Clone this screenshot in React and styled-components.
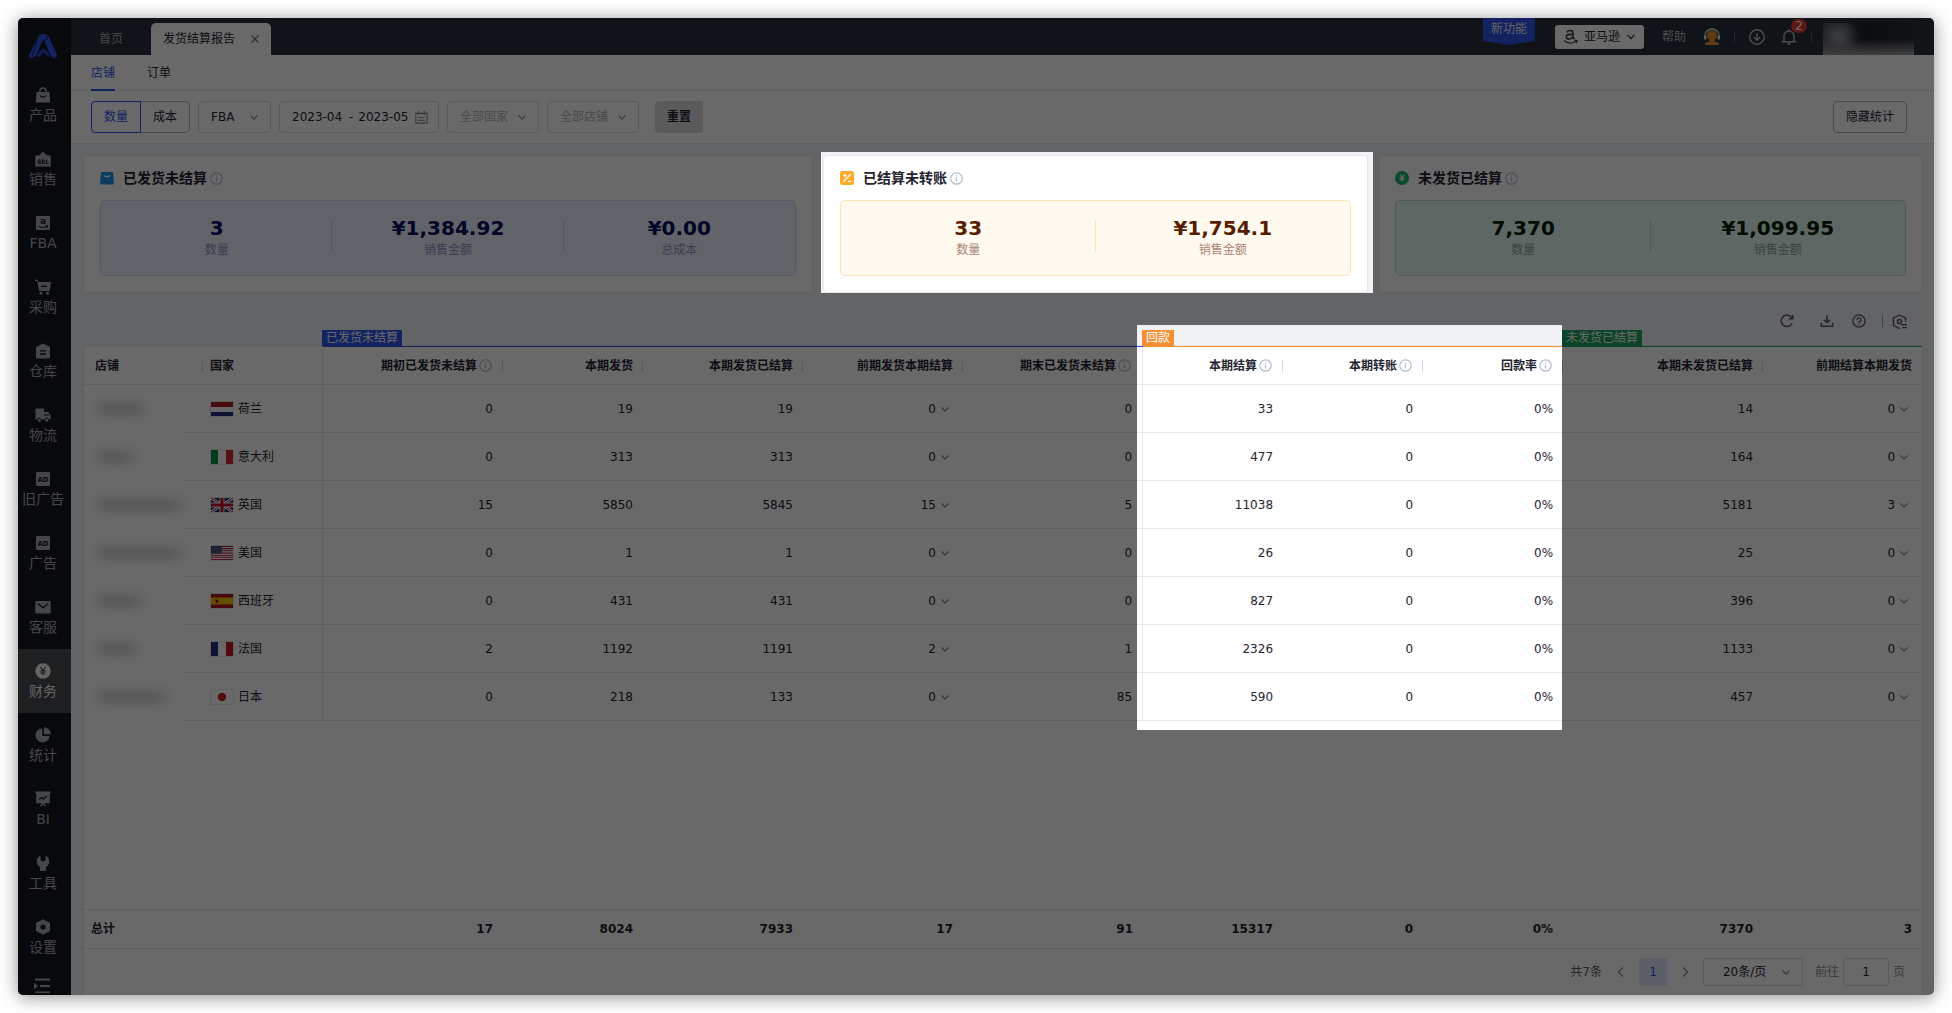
import React, { useEffect, useRef, useState } from "react";
import styled, { createGlobalStyle, css } from "styled-components";

const c = {
  brand: "#2f54eb",
  orange: "#f58d32",
  green: "#21a35c",
  page: "#f0f2f6",
  line: "#e6e7ea",
  control: "#d9dce2",
  text: "#1f2430",
  muted: "#8a8f99",
  faint: "#b0b4bc",
  nav: "#141821",
  head: "#292f3b",
};

const GlobalStyle = createGlobalStyle`
  * { box-sizing: border-box; }
  body {
    margin: 0;
    background: #fff;
    color: ${c.text};
    font: 12px/18px "DejaVu Sans", "Noto Sans CJK SC", sans-serif;
  }
  button, input, select { font: inherit; color: inherit; margin: 0; }
  a { color: inherit; text-decoration: none; }
  svg { display: block; flex: none; }
`;

const Stage = styled.div`
  height: 100vh;
  padding: 18px;
`;

const Frame = styled.div`
  position: relative;
  display: flex;
  height: 100%;
  overflow: hidden;
  border-radius: 5px;
`;

const Shadow = styled.div`
  height: 100%;
  border-radius: 5px;
  box-shadow: 0 2px 18px rgba(0, 0, 0, 0.45);
`;

const Dim = styled.div`
  position: absolute;
  inset: 0;
  z-index: 10;
  background: rgba(0, 0, 0, 0.59);
  pointer-events: none;
`;

/* ---------- side navigation ---------- */
const Side = styled.nav`
  flex: none;
  width: 53px;
  overflow: hidden;
  background: ${c.nav};
`;

const Brand = styled.a`
  display: flex;
  justify-content: center;
  height: 55px;
  padding: 15px 3px 0 0;
`;

const NavItem = styled.a`
  display: flex;
  flex-direction: column;
  align-items: center;
  gap: 2px;
  height: 64px;
  padding: 14px 3px 0 0;
  font-size: 14px;
  line-height: 20px;
  white-space: nowrap;
  color: ${(p) => (p.$active ? "#f2f3f5" : "#a8abb0")};
  background: ${(p) => (p.$active ? "#474b52" : "transparent")};
`;

const Collapse = styled.button`
  display: flex;
  justify-content: center;
  width: 100%;
  padding: 0 5px 0 0;
  border: 0;
  background: none;
  color: #a8abb0;
`;

/* ---------- top bar ---------- */
const Page = styled.div`
  flex: 1;
  min-width: 0;
  display: flex;
  flex-direction: column;
  background: ${c.page};
`;

const TopBar = styled.header`
  display: flex;
  align-items: flex-end;
  flex: none;
  height: 37px;
  background: ${c.head};
`;

const TopTab = styled.a`
  display: flex;
  align-items: center;
  gap: 15px;
  height: 32px;
  padding: 0 ${(p) => (p.$active ? 11 : 28)}px 0 ${(p) => (p.$active ? 12 : 28)}px;
  border-radius: 5px 5px 0 0;
  color: ${(p) => (p.$active ? c.text : "#a9adb5")};
  background: ${(p) => (p.$active ? "#fff" : "transparent")};
`;

const IconButton = styled.button`
  display: flex;
  align-items: center;
  justify-content: center;
  position: relative;
  padding: 0;
  border: 0;
  background: none;
`;

const TopTools = styled.div`
  display: flex;
  align-items: center;
  align-self: stretch;
  margin-left: auto;
  padding-right: 20px;
  color: #b9bdc5;
`;

const NewBadge = styled.a`
  align-self: flex-start;
  width: 52px;
  height: 27px;
  margin-right: 20px;
  padding-top: 2px;
  text-align: center;
  color: #e9edff;
  background: ${c.brand};
  clip-path: polygon(0 0, 100% 0, 100% 85%, 50% 100%, 0 85%);
`;

const Platform = styled.button`
  display: flex;
  align-items: center;
  gap: 6px;
  height: 24px;
  padding: 0 8px;
  border: 0;
  border-radius: 3px;
  background: #fff;
  color: ${c.text};
`;

const HelpLink = styled.a`
  margin: 0 17px 0 18px;
`;

const Bar = styled.span`
  width: 1px;
  height: 12px;
  margin: 0 ${(p) => p.$right}px 0 ${(p) => p.$left}px;
  background: ${(p) => p.$color || "#565c68"};
`;

const BellButton = styled(IconButton)`
  margin-left: 16px;
`;

const Count = styled.span`
  position: absolute;
  top: -10px;
  left: 10px;
  width: 16px;
  height: 14px;
  border-radius: 7px;
  background: #e5392f;
  color: #fff;
  line-height: 14px;
`;

const Account = styled.div`
  align-self: flex-end;
  width: 91px;
  height: 32px;
  background:
    radial-gradient(circle at 16px 14px, #8b8e93 4px, transparent 20px),
    linear-gradient(to bottom, transparent 50%, #9a9b9d),
    linear-gradient(to right, #45484f, #1b1e24 50%, #2a2d33);
`;

/* ---------- sub tabs and filters ---------- */
const SubTabs = styled.nav`
  display: flex;
  flex: none;
  gap: 32px;
  height: 36px;
  padding: 0 20px;
  background: #fff;
  border-bottom: 1px solid ${c.line};
`;

const SubTab = styled.a`
  height: 36px;
  line-height: 36px;
  ${(p) =>
    p.$active &&
    css`
      color: ${c.brand};
      box-shadow: inset 0 -2px ${c.brand};
    `}
`;

const Filters = styled.form`
  display: flex;
  flex: none;
  gap: 8px;
  padding: 10px 27px 10px 20px;
  background: #fff;
  border-bottom: 1px solid ${c.line};
`;

const Segment = styled.div`
  display: flex;
`;

const SegmentButton = styled.button`
  position: relative;
  height: 32px;
  width: 50px;
  padding: 0;
  background: none;
  border: 1px solid #b4b7be;
  border-radius: 0 4px 4px 0;
  margin-left: -1px;
  ${(p) =>
    p.$active &&
    css`
      z-index: 1;
      margin-left: 0;
      color: ${c.brand};
      border-color: ${c.brand};
      border-radius: 4px 0 0 4px;
    `}
`;

const SelectBox = styled.label`
  display: grid;
  align-items: center;
  width: ${(p) => p.$width}px;
  height: ${(p) => p.$height || 32}px;
  border: 1px solid ${c.control};
  border-radius: ${(p) => p.$radius || 4}px;
  color: ${(p) => (p.$placeholder ? c.faint : c.text)};
  & > * { grid-area: 1 / 1; }
  & > svg { justify-self: end; margin-right: 10px; color: ${c.muted}; pointer-events: none; }
  & > select {
    width: 100%;
    height: 100%;
    padding: 0 0 0 ${(p) => p.$pad || 12}px;
    border: 0;
    background: none;
    appearance: none;
    outline: 0;
  }
`;

const DateRange = styled.div`
  display: flex;
  align-items: center;
  gap: 5px;
  width: 160px;
  height: 32px;
  padding: 0 8px 0 12px;
  border: 1px solid ${c.control};
  border-radius: 4px;
  color: ${c.text};
  & > svg { color: ${c.muted}; }
`;

const DateInput = styled.input`
  width: 52px;
  padding: 0;
  border: 0;
  background: none;
  outline: 0;
`;

const Reset = styled.button`
  width: 48px;
  height: 32px;
  margin-left: 8px;
  padding: 0;
  border: 0;
  border-radius: 4px;
  background: #dadada;
  font-weight: 700;
`;

const HideStats = styled.button`
  width: 74px;
  height: 32px;
  margin-left: auto;
  padding: 0;
  border: 1px solid #b4b7be;
  border-radius: 4px;
  background: none;
`;

/* ---------- statistics ---------- */
const Main = styled.main`
  flex: 1;
  min-height: 0;
  display: flex;
  flex-direction: column;
  padding: 11px 11px 0 12px;
`;

const Cards = styled.div`
  display: grid;
  grid-template-columns: 730fr 545fr 545fr;
  gap: 10px;
`;

const Card = styled.section`
  padding: 11px 16px 16px;
  background: #fff;
  border: 1px solid ${c.line};
  border-radius: 4px;
`;

const CardTitle = styled.h2`
  display: flex;
  align-items: center;
  gap: 3px;
  margin: 0 0 11px;
  font-size: 14px;
  line-height: 22px;
  font-weight: 700;
  & > svg:first-child { margin-right: 6px; }
`;

const tones = {
  blue: { bg: "#eaf3fc", border: "#c4daf2", num: "#000a5e", label: "#8f93c6" },
  orange: { bg: "#fff9ef", border: "#ffe2ae", num: "#561e00", label: "#a98373" },
  green: { bg: "#e6faf2", border: "#b2e3cf", num: "#002000", label: "#8ba397" },
};

const Figures = styled.dl`
  display: flex;
  height: 76px;
  margin: 0;
  padding: 16px 0 0;
  border: 1px solid ${(p) => tones[p.$tone].border};
  border-radius: 5px;
  background: ${(p) => tones[p.$tone].bg};
`;

const Figure = styled.div`
  flex: 1;
  display: flex;
  flex-direction: column-reverse;
  justify-content: flex-end;
  text-align: center;
  background: linear-gradient(${(p) => tones[p.$tone].border}, ${(p) => tones[p.$tone].border}) right 3px / 1px 32px no-repeat;
  &:last-child { background: none; }
  & > dt { color: ${(p) => tones[p.$tone].label}; line-height: 22px; }
  & > dd {
    margin: 0;
    color: ${(p) => tones[p.$tone].num};
    font-size: 20px;
    line-height: 22px;
    font-weight: 700;
  }
`;

/* ---------- table ---------- */
const TableTools = styled.div`
  display: flex;
  flex: none;
  align-items: center;
  justify-content: flex-end;
  height: 52px;
  padding: 4px 14px 0 0;
  color: #565a63;
`;

const ToolButton = styled(IconButton)`
  width: 20px;
  height: 20px;
  margin-left: ${(p) => p.$gap || 0}px;
`;

const Panel = styled.section`
  flex: 1;
  min-height: 0;
  display: flex;
  flex-direction: column;
  background: #fff;
  border: 1px solid ${c.line};
  border-bottom: 0;
  border-radius: 4px 4px 0 0;
`;

const Table = styled.table`
  width: 100%;
  table-layout: fixed;
  border-collapse: separate;
  border-spacing: 0;
  margin-top: ${(p) => (p.$totals ? "auto" : "-16px")};
`;

const GroupCell = styled.th`
  height: 17px;
  padding: 0;
  text-align: left;
  font-weight: 400;
  line-height: 16px;
  border-bottom: ${(p) => (p.$color ? `1px solid ${p.$color}` : "0")};
`;

const GroupTag = styled.span`
  display: block;
  width: max-content;
  margin-left: -1px;
  padding: 0 4px;
  color: #fff;
  background: ${(p) => p.$color};
`;

const Head = styled.th`
  height: 38px;
  padding: 0 ${(p) => (p.$info ? 11 : 10)}px;
  text-align: ${(p) => (p.$left ? "left" : "right")};
  font-weight: 700;
  white-space: nowrap;
  border-bottom: 1px solid ${c.line};
  background: linear-gradient(#d5d8dd, #d5d8dd) right center / 1px 12px no-repeat;
  &:first-child { padding-left: 11px; }
  &:nth-child(2) { padding-left: 7px; border-right: 1px solid ${c.line}; background: none; }
  &:nth-child(7) { border-right: 1px solid ${c.line}; background: none; }
  &:last-child { background: none; }
`;

const HeadInner = styled.span`
  display: inline-flex;
  align-items: center;
  gap: 2px;
  vertical-align: middle;
`;

const Cell = styled.td`
  height: 48px;
  padding: 0 10px;
  text-align: right;
  border-bottom: 1px solid ${c.line};
  &:nth-child(7) { border-right: 1px solid ${c.line}; }
`;

const ShopCell = styled(Cell)`
  padding: 0 14px;
  border-bottom: 0;
  background: linear-gradient(to right, transparent 101px, ${c.line} 101px) bottom / 100% 1px no-repeat;
`;

const Redacted = styled.span`
  display: block;
  width: ${(p) => p.$width}px;
  height: 10px;
  background: #c6c7ca;
  filter: blur(6px);
`;

const CountryCell = styled(Cell)`
  padding: 0 7px;
  border-right: 1px solid ${c.line};
`;

const Country = styled.span`
  display: flex;
  align-items: center;
  gap: 4px;
`;

const Expand = styled.button`
  display: inline-flex;
  align-items: center;
  gap: 1px;
  padding: 0;
  border: 0;
  background: none;
  & > svg { color: ${c.muted}; }
`;

const TotalCell = styled.td`
  height: 40px;
  padding: 0 10px;
  text-align: right;
  font-weight: 700;
  border-top: 1px solid ${c.line};
  border-bottom: 1px solid ${c.line};
  &:first-child { padding-left: 7px; text-align: left; }
`;

const Pagination = styled.div`
  display: flex;
  flex: none;
  align-items: center;
  justify-content: flex-end;
  height: 46px;
  padding-right: 17px;
`;

const PageButton = styled.button`
  display: grid;
  place-items: center;
  width: 28px;
  height: 28px;
  padding: 0;
  border: 0;
  border-radius: 3px;
  margin: 0 ${(p) => (p.$active ? 4 : 0)}px;
  color: ${(p) => (p.$active ? c.brand : c.muted)};
  background: ${(p) => (p.$active ? "#dfe6fb" : "none")};
`;

const Summary = styled.span`
  margin-right: 5px;
  color: #565b66;
`;

const Jump = styled.label`
  display: flex;
  align-items: center;
  gap: 4px;
  margin-left: 12px;
  color: ${c.muted};
  & > input {
    width: 46px;
    height: 28px;
    padding: 0;
    text-align: center;
    color: ${c.text};
    background: none;
    border: 1px solid ${c.control};
    border-radius: 4px;
  }
`;

const PageSize = styled.div`
  margin-left: 4px;
`;

/* ---------- icons ---------- */
const Svg = ({ size = 16, w, h, box = "0 0 16 16", children }) => (
  <svg width={w || size} height={h || size} viewBox={box} fill="none" aria-hidden="true">
    {children}
  </svg>
);

const Chevron = ({ size = 16, dir = "M4.5 6.5 8 10l3.5-3.5", box }) => (
  <Svg size={size} box={box}><path d={dir} stroke="currentColor" strokeWidth="1.3" /></Svg>
);

const SelectArrow = () => <Chevron size={12} box="2 2 12 12" />;

const Info = () => (
  <Svg size={13} box="0 0 13 13">
    <circle cx="6.5" cy="6.5" r="5.7" stroke="#b3bdce" strokeWidth="1.2" />
    <path d="M6.5 5.6v4M6.5 3.2v1.3" stroke="#b3bdce" strokeWidth="1.3" />
  </Svg>
);

const Glyph = ({ children, y, size }) => (
  <text x={8} y={y} fontSize={size} fontWeight="700" textAnchor="middle" fill={c.nav}>{children}</text>
);

const navIcons = {
  bag: (
    <>
      <path d="M1.5 5h13l.7 10.5H.8z" fill="currentColor" />
      <path d="M5 5.5V4a3 3 0 0 1 6 0v1.5" stroke="currentColor" strokeWidth="1.5" />
      <path d="M5 8.5c1.2 2.2 4.8 2.2 6 0" stroke={c.nav} strokeWidth="1.4" />
    </>
  ),
  sell: (
    <>
      <path d="M.3 4.5h15.4v11H.3zM4 4.5l4-4 4 4z" fill="currentColor" />
      <Glyph y={12.5} size={6}>SEL</Glyph>
    </>
  ),
  fba: (
    <>
      <rect x="1" y="1" width="14" height="14" rx="1" fill="currentColor" />
      <Glyph y={9} size={9}>a</Glyph>
      <path d="M4 11.2c2.5 1.6 5.5 1.6 8 0M10.5 10.5l2 .4-.7 1.9" stroke={c.nav} strokeWidth="1.1" />
    </>
  ),
  cart: (
    <>
      <path d="M0 .8h2.5L3.3 3H16l-1.3 9H4.2L2 2H0z" fill="currentColor" />
      <path d="M6 7.3h6" stroke={c.nav} strokeWidth="1.3" />
      <circle cx="6" cy="14.3" r="1.5" fill="currentColor" />
      <circle cx="12.5" cy="14.3" r="1.5" fill="currentColor" />
    </>
  ),
  store: (
    <>
      <path d="M8 .5 15 4v10.5a1 1 0 0 1-1 1H2a1 1 0 0 1-1-1V4z" fill="currentColor" />
      <path d="M5 7.8h6M5 11h6" stroke={c.nav} strokeWidth="1.3" />
    </>
  ),
  truck: (
    <>
      <path d="M.5 1.5H9V5h4l2.5 3v4.5H.5z" fill="currentColor" />
      <path d="M9 8h5" stroke={c.nav} strokeWidth="1" />
      <circle cx="4.3" cy="13.2" r="2" fill="currentColor" stroke={c.nav} />
      <circle cx="11.8" cy="13.2" r="2" fill="currentColor" stroke={c.nav} />
    </>
  ),
  ad: (
    <>
      <rect x="1" y="1" width="14" height="14" rx="1" fill="currentColor" />
      <Glyph y={10.5} size={7}>AD</Glyph>
    </>
  ),
  mail: (
    <>
      <rect x=".3" y="2" width="15.4" height="12.5" rx="1" fill="currentColor" />
      <path d="m3 4.8 5 4 5-4" stroke={c.nav} strokeWidth="1.4" />
    </>
  ),
  money: (
    <>
      <circle cx="8" cy="8" r="7.7" fill="currentColor" />
      <path d="m5.5 4 2.5 3.5L10.5 4M8 7.5V12M5.3 7.8h5.4M5.3 10h5.4" stroke="#474b52" strokeWidth="1.2" />
    </>
  ),
  pie: (
    <>
      <path d="M7.3 1.5V9h7.2A7 7 0 1 1 7.3 1.5z" fill="currentColor" />
      <path d="M9 .3A7 7 0 0 1 15.8 7.3H9z" fill="currentColor" />
    </>
  ),
  board: (
    <>
      <path d="M.3 1.3h15.4M5.5 15l2.5-3 2.5 3" stroke="currentColor" strokeWidth="1.4" />
      <path d="M1.2 1.5h13.6v10.8H1.2z" fill="currentColor" />
      <path d="m4 8.5 2.5-2 2 1.5L12 5" stroke={c.nav} strokeWidth="1.2" />
    </>
  ),
  wrench: (
    <path d="M5.5.6v4.6L8 6.5l2.5-1.3V.6A6.5 6.5 0 0 1 11 12v3.3a.8.8 0 0 1-.8.7H5.8a.8.8 0 0 1-.8-.7V12A6.5 6.5 0 0 1 5.5.6z" fill="currentColor" />
  ),
  hex: (
    <>
      <path d="M8 .3 15 4v8l-7 3.7L1 12V4z" fill="currentColor" />
      <circle cx="8" cy="8" r="2.6" fill={c.nav} />
    </>
  ),
};

const Logo = () => (
  <Svg w={30} h={26} box="0 0 30 26">
    <path d="M1 22 10 4q2-3 4-3h3q2 0 4 3l8 18q0 3-2 3-3 0-4-2L15.5 6.5 7.5 23Q6 25 3 25q-2 0-2-3z" fill={c.brand} />
    <path d="m8 23 5-6q2.5-2 5 0l5 6-3.5.8-4-4.3-4 4.3z" fill="#2848cc" />
    <path d="m20 3-8 14M17 15l6 9M10 4l-6 20" stroke={c.nav} strokeWidth=".7" />
  </Svg>
);

const cardIcons = {
  blue: (
    <Svg size={14}>
      <path d="M1 2.5A1.5 1.5 0 0 1 2.500 1h11A1.5 1.5 0 0 1 15 2.500L16 14a1.5 1.5 0 0 1-1.5 1.5h-13A1.5 1.5 0 0 1 0 14z" fill="#2492ea" />
      <path d="M4.5 5c1.500 2 5.500 2 7 0" stroke="#fff" strokeWidth="1.6" />
    </Svg>
  ),
  orange: (
    <Svg size={14}>
      <rect width="16" height="16" rx="2.5" fill="#ffab26" />
      <path d="m3.5 12.5 9-9M5.5 3v4M3.5 5h4M9 11.8h4" stroke="#fff" strokeWidth="1.5" />
    </Svg>
  ),
  green: (
    <Svg size={14}>
      <circle cx="8" cy="8" r="8" fill="#18b368" />
      <path d="M5.5 4 8 7.5 10.5 4M8 7.5V12M5.3 8h5.4M5.3 10h5.4" stroke="#fff" strokeWidth="1.3" />
    </Svg>
  ),
};

const flagArt = {
  nl: <><path fill="#ae1c28" d="M0 0h22v5H0z" /><path fill="#fff" d="M0 5h22v5H0z" /><path fill="#21307e" d="M0 10h22v4H0z" /></>,
  it: <><path fill="#009246" d="M0 0h7v14H0z" /><path fill="#fff" d="M7 0h8v14H7z" /><path fill="#ce2b37" d="M15 0h7v14h-7z" /></>,
  gb: (
    <>
      <path fill="#012169" d="M0 0h22v14H0z" />
      <path d="m0 0 22 14M22 0 0 14" stroke="#fff" strokeWidth="3" />
      <path d="m0 0 22 14M22 0 0 14" stroke="#c8102e" strokeWidth="1" />
      <path d="M11 0v14M0 7h22" stroke="#fff" strokeWidth="5" />
      <path d="M11 0v14M0 7h22" stroke="#c8102e" strokeWidth="3" />
    </>
  ),
  us: (
    <>
      <path fill="#fff" d="M0 0h22v14H0z" />
      <path d="M0 .5h22M0 2.6h22M0 4.8h22M0 7h22M0 9.2h22M0 11.3h22M0 13.5h22" stroke="#b22234" strokeWidth="1.1" />
      <path fill="#3c3b6e" d="M0 0h11v7.5H0z" />
      <path d="M1.5 2h9M1.5 4h9M1.5 6h9" stroke="#b9b9d0" strokeWidth=".7" strokeDasharray="1 1" />
    </>
  ),
  es: <><path fill="#aa151b" d="M0 0h22v14H0z" /><path fill="#f1bf00" d="M0 3.5h22v7H0z" /><path fill="#ad1519" d="M4.500 5.500h2l1.500 2.500-2 1h-1z" /></>,
  fr: <><path fill="#21307e" d="M0 0h7v14H0z" /><path fill="#fff" d="M7 0h8v14H7z" /><path fill="#ce1126" d="M15 0h7v14h-7z" /></>,
  jp: <><path fill="#fff" d="M0 0h22v14H0z" /><circle cx="11" cy="7" r="4.2" fill="#c8201c" /></>,
};

const Flag = ({ code }) => (
  <Svg w={24} h={16} box="-1 -1 24 16">
    <rect x="-1" y="-1" width="24" height="16" rx="1" fill={c.line} />
    {flagArt[code]}
  </Svg>
);

/* ---------- data ---------- */
const nav = [
  ["产品", "bag"], ["销售", "sell"], ["FBA", "fba"], ["采购", "cart"], ["仓库", "store"],
  ["物流", "truck"], ["旧广告", "ad"], ["广告", "ad"], ["客服", "mail"], ["财务", "money"],
  ["统计", "pie"], ["BI", "board"], ["工具", "wrench"], ["设置", "hex"],
];

const cards = [
  { tone: "blue", title: "已发货未结算", items: [["数量", "3"], ["销售金额", "¥1,384.92"], ["总成本", "¥0.00"]] },
  { tone: "orange", title: "已结算未转账", items: [["数量", "33"], ["销售金额", "¥1,754.1"]] },
  { tone: "green", title: "未发货已结算", items: [["数量", "7,370"], ["销售金额", "¥1,099.95"]] },
];

const columns = [
  { label: "店铺", width: 119, left: true },
  { label: "国家", width: 120, left: true },
  { label: "期初已发货未结算", width: 180, info: true },
  { label: "本期发货", width: 140 },
  { label: "本期发货已结算", width: 160 },
  { label: "前期发货本期结算", width: 160, expand: true },
  { label: "期末已发货未结算", width: 180, info: true },
  { label: "本期结算", width: 140, info: true },
  { label: "本期转账", width: 140, info: true },
  { label: "回款率", width: 140, info: true },
  { label: "本期未发货已结算", width: 200 },
  { label: "前期结算本期发货", width: 159, expand: true },
];

const rows = [
  ["nl", "荷兰", 45, [0, 19, 19, 0, 0, 33, 0, "0%", 14, 0]],
  ["it", "意大利", 35, [0, 313, 313, 0, 0, 477, 0, "0%", 164, 0]],
  ["gb", "英国", 83, [15, 5850, 5845, 15, 5, 11038, 0, "0%", 5181, 3]],
  ["us", "美国", 83, [0, 1, 1, 0, 0, 26, 0, "0%", 25, 0]],
  ["es", "西班牙", 43, [0, 431, 431, 0, 0, 827, 0, "0%", 396, 0]],
  ["fr", "法国", 38, [2, 1192, 1191, 2, 1, 2326, 0, "0%", 1133, 0]],
  ["jp", "日本", 67, [0, 218, 133, 0, 85, 590, 0, "0%", 457, 0]],
];

const totals = [17, 8024, 7933, 17, 91, 15317, 0, "0%", 7370, 3];

const Columns = () => (
  <colgroup>
    {columns.map((col) => <col key={col.label} style={{ width: col.width }} />)}
  </colgroup>
);

/* Dims the whole frame and leaves the referenced areas lit. */
function Spotlight({ frame, card, group, table }) {
  const [path, setPath] = useState("");
  useEffect(() => {
    const measure = () => {
      const f = frame.current.getBoundingClientRect();
      const a = card.current.getBoundingClientRect();
      const g = group.current.getBoundingClientRect();
      const t = table.current.getBoundingClientRect();
      const rect = (l, top, r, b) => {
        const [x1, y1, x2, y2] = [l - f.left, top - f.top, r - f.left, b - f.top].map(Math.round);
        return `M${x1} ${y1}H${x2}V${y2}H${x1}Z`;
      };
      setPath(
        rect(f.left, f.top, f.right, f.bottom) +
        rect(a.left - 2, a.top - 3, a.right + 5, a.bottom) +
        rect(g.left - 6, g.top - 5, g.right - 1, t.bottom + 9)
      );
    };
    measure();
    const observer = new ResizeObserver(measure);
    observer.observe(frame.current);
    return () => observer.disconnect();
  }, [frame, card, group, table]);
  return <Dim style={path ? { clipPath: `path(evenodd, "${path}")` } : undefined} />;
}

export default function App() {
  const frame = useRef(null);
  const litCard = useRef(null);
  const litGroup = useRef(null);
  const table = useRef(null);

  return (
    <Stage>
      <GlobalStyle />
      <Shadow>
        <Frame ref={frame}>
          <Side>
            <Brand href="#" aria-label="首页"><Logo /></Brand>
            {nav.map(([label, icon]) => (
              <NavItem key={label} href="#" $active={label === "财务"}>
                <Svg>{navIcons[icon]}</Svg>
                {label}
              </NavItem>
            ))}
            <Collapse type="button" aria-label="展开菜单">
              <Svg w={16} h={24} box="0 0 16 24">
                <path d="M1 10.5h15M6 17h10M1 23.5h15" stroke="currentColor" strokeWidth="2" />
                <path d="m0 14 4 3-4 3z" fill="currentColor" />
              </Svg>
            </Collapse>
          </Side>

          <Page>
            <TopBar>
              <TopTab href="#">首页</TopTab>
              <TopTab href="#" $active>
                发货结算报告
                <Svg size={10} box="0 0 10 10"><path d="m1.5 1.5 7 7m0-7-7 7" stroke="#6f747e" strokeWidth="1.2" /></Svg>
              </TopTab>
              <TopTools>
                <NewBadge href="#">新功能</NewBadge>
                <Platform type="button">
                  <Svg w={15} h={16} box="0 0 15 16">
                    <path d="M4 3.5C4.5 1 10 .5 10 4v4.5l1.2 1.5M10 5.5C3 5 3 7 3.3 8.5c.8 2.5 5.7 2 6.700-1" stroke="#3a3f4b" strokeWidth="1.6" />
                    <path d="M1 11.5c4 3.3 9 3.3 12.5.6M11.5 11.2l2.5.3-.6 2.5" stroke="#3a3f4b" strokeWidth="1.2" />
                  </Svg>
                  亚马逊
                  <Svg size={10} box="0 0 10 10"><path d="m1.5 3 3.5 3.5L8.5 3" stroke="#3a3f4b" strokeWidth="1.3" /></Svg>
                </Platform>
                <HelpLink href="#">帮助</HelpLink>
                <IconButton type="button" aria-label="客服">
                  <Svg w={18} h={17} box="0 0 18 17">
                    <path d="M2 9.5V8a7 7 0 0 1 14 0v1.5" stroke="#dfe1e5" strokeWidth="1.3" />
                    <path d="M1 7.5h2.5v4H1zM14.5 7.5H17v4h-2.5z" fill="#dfe1e5" />
                    <circle cx="9" cy="7.5" r="5" fill="#e8932f" />
                    <path d="M6.5 11h5v2.5L16 15v2H2v-2l4.5-1.5z" fill="#e8932f" />
                  </Svg>
                </IconButton>
                <Bar $left={13} $right={14} />
                <IconButton type="button" aria-label="下载">
                  <Svg>
                    <circle cx="8" cy="8" r="7.2" stroke="currentColor" strokeWidth="1.4" />
                    <path d="M8 4v7M5 8.3l3 3 3-3" stroke="currentColor" strokeWidth="1.5" />
                  </Svg>
                </IconButton>
                <BellButton type="button" aria-label="通知">
                  <Svg>
                    <path d="M3 12.5V7a5 5 0 0 1 10 0v5.5M.8 12.8h14.4M6.5 14.8h3M8 .3V2" stroke="currentColor" strokeWidth="1.4" />
                  </Svg>
                  <Count>2</Count>
                </BellButton>
                <Bar $left={14} $right={11} />
                <Account />
              </TopTools>
            </TopBar>

            <SubTabs>
              <SubTab href="#" $active>店铺</SubTab>
              <SubTab href="#">订单</SubTab>
            </SubTabs>

            <Filters onSubmit={(e) => e.preventDefault()}>
              <Segment>
                <SegmentButton type="button" $active>数量</SegmentButton>
                <SegmentButton type="button">成本</SegmentButton>
              </Segment>
              <SelectBox $width={73}>
                <select aria-label="发货方式"><option>FBA</option></select>
                <SelectArrow />
              </SelectBox>
              <DateRange>
                <DateInput aria-label="开始月份" defaultValue="2023-04" />
                <span>-</span>
                <DateInput aria-label="结束月份" defaultValue="2023-05" />
                <Svg size={13}>
                  <path d="M1 3h14v12H1zM4.5 0v5M11.5 0v5M4 8h8M4 11.5h8" stroke="currentColor" strokeWidth="1.4" />
                </Svg>
              </DateRange>
              <SelectBox $width={92} $placeholder>
                <select aria-label="国家"><option>全部国家</option></select>
                <SelectArrow />
              </SelectBox>
              <SelectBox $width={92} $placeholder>
                <select aria-label="店铺"><option>全部店铺</option></select>
                <SelectArrow />
              </SelectBox>
              <Reset type="reset">重置</Reset>
              <HideStats type="button">隐藏统计</HideStats>
            </Filters>

            <Main>
              <Cards>
                {cards.map((card) => (
                  <Card key={card.tone} ref={card.tone === "orange" ? litCard : null}>
                    <CardTitle>{cardIcons[card.tone]}{card.title}<Info /></CardTitle>
                    <Figures $tone={card.tone}>
                      {card.items.map(([label, value]) => (
                        <Figure key={label} $tone={card.tone}>
                          <dt>{label}</dt>
                          <dd>{value}</dd>
                        </Figure>
                      ))}
                    </Figures>
                  </Card>
                ))}
              </Cards>

              <TableTools>
                <ToolButton type="button" aria-label="刷新">
                  <Svg size={14}><path d="M13.8 10.5A6.5 6.5 0 1 1 13.5 4.5M14.5 1v4.5H10" stroke="currentColor" strokeWidth="1.7" /></Svg>
                </ToolButton>
                <ToolButton type="button" aria-label="导出" $gap={20}>
                  <Svg size={14}><path d="M8 1v8M4.5 6.5 8 10l3.5-3.5M1.5 10v4h13v-4" stroke="currentColor" strokeWidth="1.7" /></Svg>
                </ToolButton>
                <ToolButton type="button" aria-label="说明" $gap={12}>
                  <Svg size={14}>
                    <circle cx="8" cy="8" r="7" stroke="currentColor" strokeWidth="1.5" />
                    <path d="M5.8 6.5a2.2 2.2 0 1 1 3.2 2c-.8.4-1 .7-1 1.5M8 11v1.5" stroke="currentColor" strokeWidth="1.5" />
                  </Svg>
                </ToolButton>
                <Bar $left={13} $right={6} $color="#9a9da4" />
                <ToolButton type="button" aria-label="列设置">
                  <Svg size={15}>
                    <path d="M8.5 15 7.5 15.3 1.5 12V4.5L8 1l6.5 3.5V8M10 11.5h6M11 14.5h5" stroke="currentColor" strokeWidth="1.5" />
                    <circle cx="8" cy="8" r="2.2" stroke="currentColor" strokeWidth="1.5" />
                  </Svg>
                </ToolButton>
              </TableTools>

              <Panel>
                <Table ref={table}>
                  <Columns />
                  <thead>
                    <tr>
                      <GroupCell as="td" colSpan={2} />
                      <GroupCell colSpan={5} $color={c.brand}><GroupTag $color={c.brand}>已发货未结算</GroupTag></GroupCell>
                      <GroupCell colSpan={3} $color={c.orange} ref={litGroup}><GroupTag $color={c.orange}>回款</GroupTag></GroupCell>
                      <GroupCell colSpan={2} $color={c.green}><GroupTag $color={c.green}>未发货已结算</GroupTag></GroupCell>
                    </tr>
                    <tr>
                      {columns.map((col) => (
                        <Head key={col.label} $left={col.left} $info={col.info}>
                          <HeadInner>{col.label}{col.info && <Info />}</HeadInner>
                        </Head>
                      ))}
                    </tr>
                  </thead>
                  <tbody>
                    {rows.map(([code, country, width, values]) => (
                      <tr key={code}>
                        <ShopCell><Redacted $width={width} /></ShopCell>
                        <CountryCell><Country><Flag code={code} />{country}</Country></CountryCell>
                        {values.map((value, i) => (
                          <Cell key={i}>
                            {columns[i + 2].expand
                              ? <Expand type="button">{value}<Chevron /></Expand>
                              : value}
                          </Cell>
                        ))}
                      </tr>
                    ))}
                  </tbody>
                </Table>
                <Table $totals>
                  <Columns />
                  <tbody>
                    <tr>
                      <TotalCell colSpan={2}>总计</TotalCell>
                      {totals.map((value, i) => <TotalCell key={i}>{value}</TotalCell>)}
                    </tr>
                  </tbody>
                </Table>
                <Pagination>
                  <Summary>共7条</Summary>
                  <PageButton type="button" aria-label="上一页"><Chevron dir="M10 3.5 5.5 8l4.5 4.5" /></PageButton>
                  <PageButton type="button" $active>1</PageButton>
                  <PageButton type="button" aria-label="下一页"><Chevron dir="M6 3.5 10.5 8 6 12.5" /></PageButton>
                  <PageSize>
                    <SelectBox $width={100} $height={28} $radius={2} $pad={19}>
                      <select aria-label="每页条数"><option>20条/页</option></select>
                      <SelectArrow />
                    </SelectBox>
                  </PageSize>
                  <Jump>前往<input defaultValue="1" />页</Jump>
                </Pagination>
              </Panel>
            </Main>
          </Page>

          <Spotlight frame={frame} card={litCard} group={litGroup} table={table} />
        </Frame>
      </Shadow>
    </Stage>
  );
}
